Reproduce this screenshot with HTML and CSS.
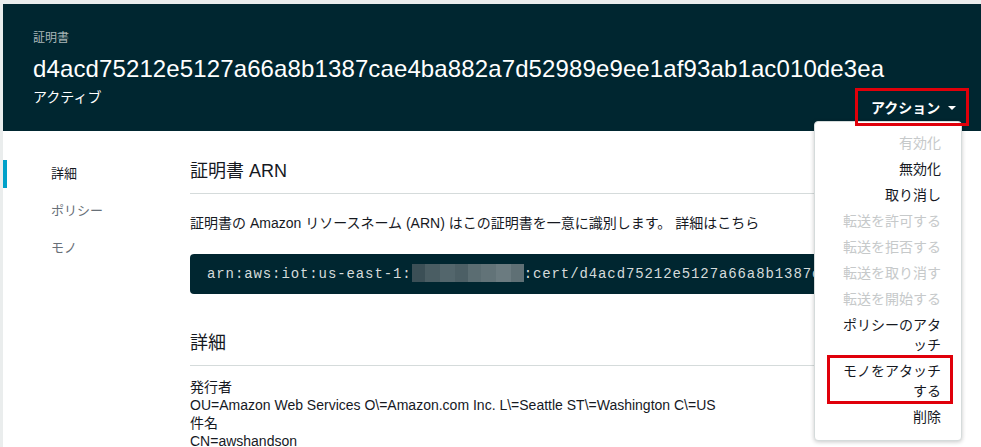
FILE: index.html
```html
<!DOCTYPE html>
<html lang="ja">
<head>
<meta charset="utf-8">
<title>証明書</title>
<link rel="stylesheet" href="styles.css">
</head>
<body>
<div class="page">
  <header class="hero">
    <div class="hero-text">
      <div class="hero-label">証明書</div>
      <h1 class="hero-title">d4acd75212e5127a66a8b1387cae4ba882a7d52989e9ee1af93ab1ac010de3ea</h1>
      <div class="hero-status">アクティブ</div>
    </div>
    <div class="actions">
      <button class="actions-btn" type="button">アクション<span class="caret"></span></button>
      <ul class="menu">
        <li class="menu-item disabled">有効化</li>
        <li class="menu-item">無効化</li>
        <li class="menu-item">取り消し</li>
        <li class="menu-item disabled">転送を許可する</li>
        <li class="menu-item disabled">転送を拒否する</li>
        <li class="menu-item disabled">転送を取り消す</li>
        <li class="menu-item disabled">転送を開始する</li>
        <li class="menu-item">ポリシーのアタッチ</li>
        <li class="menu-item marked">モノをアタッチする</li>
        <li class="menu-item">削除</li>
      </ul>
    </div>
  </header>
  <div class="main">
    <nav class="side">
      <a class="side-item active">詳細</a>
      <a class="side-item">ポリシー</a>
      <a class="side-item">モノ</a>
    </nav>
    <section class="content">
      <h2 class="section-title">証明書 ARN</h2>
      <p class="desc">証明書の Amazon リソースネーム (ARN) はこの証明書を一意に識別します。 詳細はこちら</p>
      <div class="code">arn:aws:iot:us-east-1:<span class="blur"></span>:cert/d4acd75212e5127a66a8b1387cae4ba882a7d52989e9ee1af93ab1ac010de3ea</div>
      <h2 class="section-title second">詳細</h2>
      <dl class="props">
        <dt>発行者</dt>
        <dd>OU=Amazon Web Services O\=Amazon.com Inc. L\=Seattle ST\=Washington C\=US</dd>
        <dt>件名</dt>
        <dd>CN=awshandson</dd>
      </dl>
    </section>
  </div>
</div>
</body>
</html>
```
FILE: styles.css
```css
html, body {
  margin: 0;
  padding: 0;
  height: 100%;
  overflow: hidden;
}
body {
  background: #eaeded;
  font-family: "Liberation Sans", "Noto Sans CJK JP", sans-serif;
  color: #16191f;
}
.page {
  margin: 4px 0 0 3px;
  background: #ffffff;
  min-height: 460px;
}
.hero {
  box-sizing: border-box;
  height: 127px;
  background: #002630;
  display: flex;
  justify-content: space-between;
  padding: 26px 12px 5px 30px;
}
.hero-text {
  align-self: flex-start;
  flex: 1;
  min-width: 0;
  white-space: nowrap;
}
.hero-label {
  font-size: 12px;
  line-height: 16px;
  color: #aab7b8;
}
.hero-title {
  margin: 7px 0 0;
  font-size: 24px;
  line-height: 32px;
  font-weight: normal;
  letter-spacing: 0.12px;
  color: #ffffff;
}
.hero-status {
  margin-top: 2px;
  font-size: 14px;
  line-height: 20px;
  color: #ffffff;
}
.actions {
  flex: none;
  align-self: flex-end;
  position: relative;
}
.actions-btn {
  position: relative;
  z-index: 2;
  display: flex;
  align-items: center;
  box-sizing: border-box;
  width: 114px;
  height: 38px;
  padding: 0 9px 0 13px;
  background: transparent;
  border: 3px solid #e0000a;
  color: #ffffff;
  font-family: inherit;
  font-size: 14px;
  font-weight: bold;
  white-space: nowrap;
  cursor: pointer;
}
.caret {
  margin: 2px 0 0 8px;
  width: 0;
  height: 0;
  border-left: 4px solid transparent;
  border-right: 4px solid transparent;
  border-top: 4px solid #ffffff;
}
.menu {
  position: absolute;
  z-index: 1;
  top: 33px;
  right: 7px;
  box-sizing: border-box;
  width: 148px;
  margin: 0;
  padding: 8px 0 10px;
  list-style: none;
  background: #ffffff;
  border: 1px solid #d5dbdb;
  border-radius: 4px;
  box-shadow: 0 1px 4px rgba(0, 0, 0, 0.22);
}
.menu-item {
  position: relative;
  padding: 3px 20px 3px 22px;
  font-size: 14px;
  line-height: 20px;
  text-align: right;
  color: #16191f;
  line-break: loose;
}
.menu-item.disabled {
  color: #c6c9ca;
}
.menu-item.marked::after {
  content: "";
  position: absolute;
  top: -3px;
  bottom: 0;
  left: 12px;
  right: 8px;
  border: 3px solid #e0000a;
}
.main {
  display: flex;
}
.side {
  box-sizing: border-box;
  width: 187px;
  flex: none;
  padding-top: 29px;
  display: flex;
  flex-direction: column;
  gap: 9px;
}
.side-item {
  display: block;
  padding-left: 44px;
  border-left: 4px solid transparent;
  font-size: 13px;
  line-height: 28px;
  color: #687078;
}
.side-item.active {
  border-left-color: #00a1c9;
  color: #16191f;
}
.content {
  flex: 1;
  min-width: 0;
  padding: 28px 30px 0 0;
}
.section-title {
  margin: 0;
  padding-bottom: 10px;
  border-bottom: 1px solid #d5dbdb;
  font-size: 18px;
  line-height: 24px;
  font-weight: normal;
  color: #16191f;
}
.section-title.second {
  margin-top: 37px;
}
.desc {
  margin: 19px 0 0;
  font-size: 14px;
  line-height: 20px;
}
.code {
  margin-top: 21px;
  box-sizing: border-box;
  height: 40px;
  padding: 0 17px;
  background: #002630;
  border-radius: 4px;
  color: #d5dbdb;
  font-family: "Liberation Mono", monospace;
  font-size: 14px;
  line-height: 40px;
  letter-spacing: 0.9px;
  white-space: nowrap;
  overflow: hidden;
}
.blur {
  display: inline-block;
  vertical-align: middle;
  width: 112px;
  height: 18px;
  margin-top: -3px;
  background:
    linear-gradient(to right,
      #3b4f56 0 12%, #4a5d63 12% 25%, #53666c 25% 38%, #4c5f65 38% 50%,
      #5b6d72 50% 62%, #627378 62% 75%, #6b7b80 75% 88%, #5f7075 88% 100%);
}
.props {
  margin: 12px 0 0;
  font-size: 14px;
  line-height: 18px;
}
.props dt,
.props dd {
  margin: 0;
}
```
